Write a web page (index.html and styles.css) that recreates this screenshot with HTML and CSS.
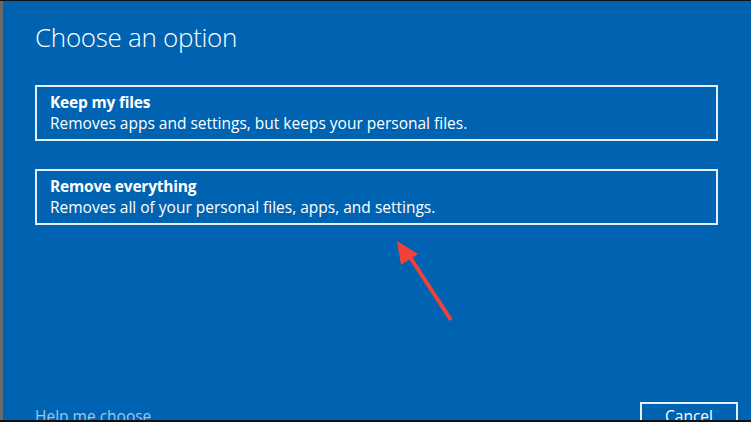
FILE: index.html
```html
<!DOCTYPE html>
<html lang="en">
<head>
<meta charset="utf-8">
<title>Choose an option</title>
<link rel="stylesheet" href="styles.css">
</head>
<body>
<div class="frame">
  <main class="screen">
    <h1 class="title">Choose an option</h1>
    <div class="options">
      <div class="option">
        <div class="option-name">Keep my files</div>
        <div class="option-desc">Removes apps and settings, but keeps your personal files.</div>
      </div>
      <div class="option">
        <div class="option-name">Remove everything</div>
        <div class="option-desc">Removes all of your personal files, apps, and settings.</div>
      </div>
    </div>
    <footer class="footer">
      <span class="help">Help me choose</span>
      <span class="cancel">Cancel</span>
    </footer>
  </main>
  <svg class="arrow" width="751" height="422" viewBox="0 0 751 422">
    <line x1="451" y1="320" x2="408" y2="254" stroke="#f0423a" stroke-width="4"/>
    <polygon points="397,241 401,265 418,254" fill="#f0423a"/>
  </svg>
</div>
</body>
</html>
```
FILE: styles.css
```css
html, body {
  margin: 0;
  padding: 0;
  background: #0063b1;
}
.frame {
  position: relative;
  width: 751px;
  height: 422px;
  box-sizing: border-box;
  border-top: 1px solid #111;
  border-bottom: 2px solid #111;
  overflow: hidden;
}
.screen {
  height: 419px;
  box-sizing: border-box;
  border-left: 3px solid #6a6a6a;
  padding-left: 32px;
  padding-right: 33px;
  overflow: hidden;
  color: #fff;
  font-family: "Open Sans", "Noto Sans", sans-serif;
}
.title {
  margin: 0;
  padding-top: 18px;
  font-weight: 300;
  font-size: 26px;
  line-height: 36px;
  letter-spacing: -0.3px;
}
.options {
  margin-top: 30px;
  display: flex;
  flex-direction: column;
  gap: 28px;
}
.option {
  border: 2px solid #e4f0fb;
  padding: 5px 13px 5px;
  font-size: 15.5px;
  line-height: 21px;
}
.option-name {
  font-weight: 700;
  letter-spacing: -0.2px;
}
.footer {
  margin-top: 177px;
  margin-right: -20px;
  display: flex;
  justify-content: space-between;
  align-items: flex-start;
  font-size: 15.5px;
  line-height: 21px;
}
.help {
  color: #9cc7ee;
  padding-top: 4px;
}
.cancel {
  border: 2px solid #e4f0fb;
  width: 94px;
  text-align: center;
  padding: 2px 0 6px;
}
.arrow {
  position: absolute;
  left: 0;
  top: -1px;
}
```
